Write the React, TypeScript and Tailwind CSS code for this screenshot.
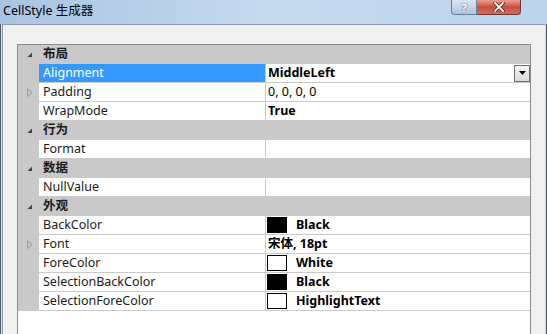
import React from "react";

type Row =
  | { kind: "cat"; label: string }
  | {
      kind: "prop";
      label: string;
      value?: string;
      bold?: boolean;
      expand?: boolean;
      selected?: boolean;
      dropdown?: boolean;
      swatch?: "black" | "white";
    };

const rows: Row[] = [
  { kind: "cat", label: "布局" },
  { kind: "prop", label: "Alignment", value: "MiddleLeft", bold: true, selected: true, dropdown: true },
  { kind: "prop", label: "Padding", value: "0, 0, 0, 0", expand: true },
  { kind: "prop", label: "WrapMode", value: "True", bold: true },
  { kind: "cat", label: "行为" },
  { kind: "prop", label: "Format" },
  { kind: "cat", label: "数据" },
  { kind: "prop", label: "NullValue" },
  { kind: "cat", label: "外观" },
  { kind: "prop", label: "BackColor", value: "Black", bold: true, swatch: "black" },
  { kind: "prop", label: "Font", value: "宋体, 18pt", bold: true, expand: true },
  { kind: "prop", label: "ForeColor", value: "White", bold: true, swatch: "white" },
  { kind: "prop", label: "SelectionBackColor", value: "Black", bold: true, swatch: "black" },
  { kind: "prop", label: "SelectionForeColor", value: "HighlightText", bold: true, swatch: "white" },
];

const CollapseGlyph = () => (
  <svg width="6" height="6" viewBox="0 0 6 6" className="block">
    <path d="M5 0.5 L5 5 L0.5 5 Z" fill="#404040" />
  </svg>
);

const ExpandGlyph = () => (
  <svg width="6" height="9" viewBox="0 0 6 9" className="block">
    <path d="M0.5 0.5 L5 4.5 L0.5 8.5 Z" fill="none" stroke="#9a9a9a" strokeWidth="1" />
  </svg>
);

function GridRow({ row }: { row: Row }) {
  if (row.kind === "cat") {
    return (
      <div className="flex h-[19px] items-center bg-[#c9c9c9]">
        <div className="flex w-[21px] shrink-0 justify-end pr-[6px]">
          <CollapseGlyph />
        </div>
        <span className="pl-[4px] text-[12.5px] font-bold text-[#1a1a1a]">{row.label}</span>
      </div>
    );
  }
  return (
    <div className="flex h-[19px]">
      <div className="flex w-[21px] shrink-0 items-center bg-[#c9c9c9] pl-[9px]">
        {row.expand && <ExpandGlyph />}
      </div>
      <div
        className={`flex w-[226px] shrink-0 items-center border-b border-[#c9c9c9] pl-[4px] text-[12.5px] ${
          row.selected ? "bg-[#3399ff] text-white" : "bg-white text-[#1a1a1a]"
        }`}
      >
        {row.label}
      </div>
      <div className="flex flex-1 items-center border-b border-l border-[#c9c9c9] bg-white text-[12.5px] text-black">
        {row.swatch && (
          <span
            className={`ml-[1px] mr-[9px] h-[16px] w-[20px] shrink-0 border border-black ${
              row.swatch === "black" ? "bg-black" : "bg-white"
            }`}
          />
        )}
        <span className={`${row.swatch ? "" : "pl-[2px]"} ${row.bold ? "font-bold" : ""}`}>
          {row.value}
        </span>
        {row.dropdown && (
          <span className="ml-auto flex h-[17px] w-[16px] items-center justify-center border border-[#707070] bg-gradient-to-b from-[#f4f4f4] to-[#dcdcdc]">
            <svg width="7" height="4" viewBox="0 0 7 4">
              <path d="M0 0 L7 0 L3.5 4 Z" fill="#000" />
            </svg>
          </span>
        )}
      </div>
    </div>
  );
}

export default function App() {
  return (
    <div
      className="relative h-[334px] w-[547px] overflow-hidden bg-[#b9d1ea]"
      style={{ fontFamily: '"Noto Sans", "Noto Sans CJK SC", sans-serif' }}
    >
      {/* Title bar */}
      <div className="relative flex h-[24px] items-start bg-gradient-to-r from-[#a9c4e2] via-[#c6daf0] to-[#bcd3ec]">
        <span className="pl-[3px] pt-[3px] text-[12.5px] leading-[16px] text-black">CellStyle 生成器</span>
        <div className="absolute right-[26px] top-0 flex">
          <div className="flex h-[15px] w-[26px] items-center justify-center rounded-bl-[4px] border border-t-0 border-[#6d7f95] bg-gradient-to-b from-[#dbe6f3] to-[#aec4de] text-[11px] font-bold leading-none text-white [text-shadow:0_0_2px_#34475e]">
            ?
          </div>
          <div className="flex h-[15px] w-[44px] items-center justify-center rounded-br-[4px] border border-l-0 border-t-0 border-[#6d3a3a] bg-gradient-to-b from-[#e6a190] via-[#c94f3b] to-[#d06a55]">
            <svg width="12" height="10" viewBox="0 0 12 10">
              <path d="M2 1 L10 9 M10 1 L2 9" stroke="#4a1a14" strokeWidth="3.2" strokeLinecap="square" />
              <path d="M2 1 L10 9 M10 1 L2 9" stroke="#ffffff" strokeWidth="1.8" strokeLinecap="square" />
            </svg>
          </div>
        </div>
      </div>

      {/* Window body */}
      <div className="flex h-[310px]">
        <div className="w-[1px] bg-[#4f5b68]" />
        <div className="w-[1px] bg-[#d6e2ef]" />
        <div className="flex flex-1 flex-col border-l border-t border-[#8a98aa] bg-[#f0f0f0] pl-[14px] pr-[14px] pt-[19px]">
          <div className="flex-1 border border-b-0 border-[#8c8c8c] bg-white">
            {rows.map((r, i) => (
              <GridRow key={i} row={r} />
            ))}
          </div>
        </div>
        <div className="w-[1px] bg-[#c5d5e6]" />
        <div className="w-[1px] bg-[#4f5b68]" />
      </div>
    </div>
  );
}
